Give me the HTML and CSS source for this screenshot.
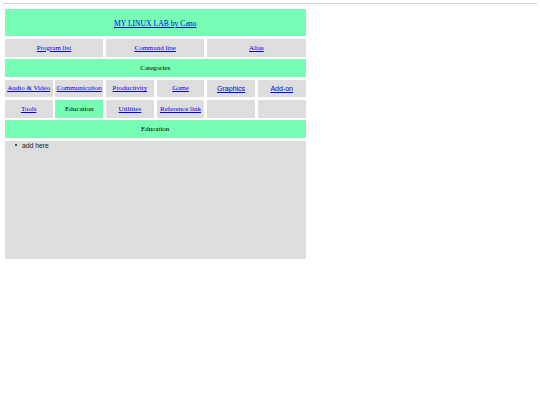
FILE: index.html
```html
<!DOCTYPE html>
<html>
<head>
<meta charset="utf-8">
<title>MY LINUX LAB by Cano</title>
<link rel="stylesheet" href="styles.css">
</head>
<body>
<div class="rule"></div>
<div class="page">
  <div class="cell green title"><a href="#">MY LINUX LAB by Cano</a></div>
  <div class="grid3">
    <div class="cell gray"><a href="#">Program list</a></div>
    <div class="cell gray"><a href="#">Command line</a></div>
    <div class="cell gray"><a href="#">Alias</a></div>
  </div>
  <div class="cell green bar">Categories</div>
  <div class="grid6">
    <div class="cell gray"><a href="#">Audio &amp; Video</a></div>
    <div class="cell gray"><a href="#">Communication</a></div>
    <div class="cell gray"><a href="#">Productivity</a></div>
    <div class="cell gray"><a href="#">Game</a></div>
    <div class="cell gray"><a href="#" class="sans">Graphics</a></div>
    <div class="cell gray"><a href="#" class="sans">Add-on</a></div>
    <div class="cell gray"><a href="#">Tools</a></div>
    <div class="cell green">Education</div>
    <div class="cell gray"><a href="#">Utilities</a></div>
    <div class="cell gray"><a href="#">Reference link</a></div>
    <div class="cell gray"></div>
    <div class="cell gray"></div>
  </div>
  <div class="cell green bar">Education</div>
  <div class="content">
    <ul class="list">
      <li>add here</li>
    </ul>
  </div>
</div>
</body>
</html>
```
FILE: styles.css
```css
html, body {
  margin: 0;
  padding: 0;
  background: #ffffff;
}
body {
  font-family: "Liberation Serif", "Times New Roman", serif;
  font-size: 7px;
  color: #000;
}
.rule {
  margin: 3px 3px 0 3px;
  border-top: 1px solid #d4d4d4;
  height: 0;
}
.page {
  width: 301px;
  margin: 5px 0 0 4.7px;
  display: flex;
  flex-direction: column;
  gap: 2.7px;
}
.cell {
  display: flex;
  align-items: center;
  justify-content: center;
  height: 17.7px;
  text-align: center;
}
.green { background: #78fdb4; }
.gray { background: #dddddd; }
.title {
  height: 27.3px;
  padding-top: 2px;
  box-sizing: border-box;
  font-size: 7.65px;
}
.bar { height: 17.5px; }
.grid3 {
  display: grid;
  grid-template-columns: repeat(3, 1fr);
  gap: 2.7px;
}
.grid6 {
  display: grid;
  grid-template-columns: repeat(6, 1fr);
  gap: 2.4px 2.7px;
}
.grid6 .cell { height: 17.9px; }
a { color: #0000ee; text-decoration: underline; }
.sans { font-family: "Liberation Sans", Arial, sans-serif; }
.content {
  background: #dddddd;
  height: 118.7px;
  padding-top: 1px;
  box-sizing: border-box;
}
.list {
  margin: 0;
  padding: 0 0 0 10.5px;
  list-style: none;
  font-family: "Liberation Sans", Arial, sans-serif;
  font-size: 6.8px;
  line-height: 8px;
  color: #222;
}
.list li::before {
  content: "";
  display: inline-block;
  width: 2px;
  height: 2px;
  border-radius: 50%;
  background: #222;
  margin-right: 4.8px;
  vertical-align: 1.5px;
}
```
